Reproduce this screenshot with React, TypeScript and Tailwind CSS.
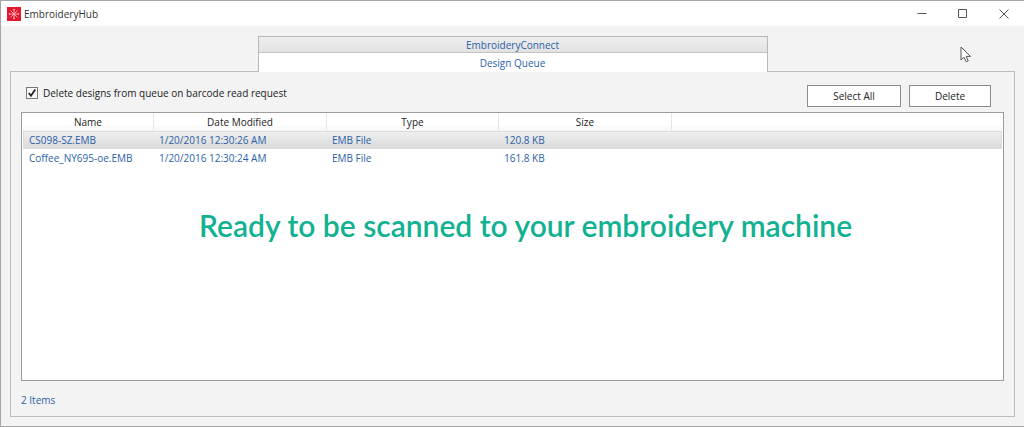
import React, { useState } from 'react';
import clsx from 'clsx';

interface Design {
  name: string;
  modified: string;
  type: string;
  size: string;
}

const DESIGNS: Design[] = [
  { name: 'CS098-SZ.EMB', modified: '1/20/2016 12:30:26 AM', type: 'EMB File', size: '120.8 KB' },
  { name: 'Coffee_NY695-oe.EMB', modified: '1/20/2016 12:30:24 AM', type: 'EMB File', size: '161.8 KB' },
];

const TABS = ['EmbroideryConnect', 'Design Queue'];

const HEAD_CELL = 'border-r border-[#e6e6e6] p-0 text-center font-normal';

const AppLogo = () => (
  <svg viewBox="0 0 14 14" className="size-3.5" aria-hidden="true">
    <rect width="14" height="14" fill="#e3172e" />
    <g stroke="#ffb3b8" strokeWidth="0.9" strokeLinecap="round">
      <path d="M7 2.6v8.8M2.4 7h9.2M3.8 3.8l6.4 6.4M10.2 3.8l-6.4 6.4" />
    </g>
    <g fill="#ffc4c8">
      <circle cx="7" cy="2.6" r="0.8" />
      <circle cx="7" cy="11.4" r="0.8" />
      <circle cx="2.4" cy="7" r="0.8" />
      <circle cx="11.6" cy="7" r="0.8" />
    </g>
  </svg>
);

const TitleBar = () => (
  <header className="flex h-[25px] items-center justify-between bg-white pl-[6px] pr-[15px]">
    <div className="flex items-center gap-[3px] text-[#333]">
      <AppLogo />
      <h1>EmbroideryHub</h1>
    </div>
    <div className="flex gap-[31px] text-[#555]">
      <button type="button" aria-label="Minimize">
        <svg viewBox="0 0 10 10" className="size-2.5" fill="none" stroke="currentColor">
          <path d="M0.5 4.5h9" />
        </svg>
      </button>
      <button type="button" aria-label="Maximize">
        <svg viewBox="0 0 10 10" className="size-2.5" fill="none" stroke="currentColor">
          <path d="M0.5 0.5h8v8h-8z" />
        </svg>
      </button>
      <button type="button" aria-label="Close">
        <svg viewBox="0 0 10 10" className="size-2.5" fill="none" stroke="currentColor">
          <path d="M0.5 0.5l9 9M9.5 0.5l-9 9" />
        </svg>
      </button>
    </div>
  </header>
);

export default function App() {
  const [tab, setTab] = useState('Design Queue');
  const [autoDelete, setAutoDelete] = useState(true);
  const [selected, setSelected] = useState<string[]>(['CS098-SZ.EMB']);

  return (
    <div className="relative flex min-h-screen flex-col border-y border-l border-[#a6a6a6] bg-[#f3f3f3] font-['Open_Sans','Noto_Sans',sans-serif] text-[10px] leading-4 text-[#222]">
      <TitleBar />

      <main className="flex flex-1 flex-col px-[9px] pb-[9px] pt-[10px]">
        <div
          role="tablist"
          className="z-10 -mb-px flex w-[510px] max-w-full flex-col self-center border-x border-t border-[#b8b8b8] text-[#2b5fa8]"
        >
          {TABS.map((t) => (
            <button
              key={t}
              type="button"
              role="tab"
              aria-selected={t === tab}
              onClick={() => setTab(t)}
              className={clsx(
                t === tab
                  ? 'h-[19px] bg-white'
                  : 'h-4 border-b border-[#c4c4c4] bg-linear-to-b from-[#eeeeee] to-[#e2e2e2]',
              )}
            >
              {t}
            </button>
          ))}
        </div>

        <section className="flex flex-1 flex-col border border-[#bdbdbd] px-[10px]">
          <div className="flex items-start justify-between pb-[5px] pl-[5px] pr-[13px] pt-[13px]">
            <label className="flex items-center gap-[5px]">
              <span className="relative flex size-3">
                <input
                  type="checkbox"
                  checked={autoDelete}
                  onChange={(e) => setAutoDelete(e.target.checked)}
                  className="peer size-3 appearance-none border border-[#777] bg-[#fafafa]"
                />
                <svg
                  viewBox="0 0 12 12"
                  className="pointer-events-none invisible absolute inset-0 peer-checked:visible"
                  fill="none"
                  stroke="#222"
                  strokeWidth="1.8"
                >
                  <path d="M2.8 6l2.2 2.8L9.2 2.6" />
                </svg>
              </span>
              Delete designs from queue on barcode read request
            </label>
            <div className="flex gap-2">
              <button
                type="button"
                onClick={() => setSelected(DESIGNS.map((d) => d.name))}
                className="h-[22px] w-[94px] border border-[#8c8c8c] bg-white"
              >
                Select All
              </button>
              <button
                type="button"
                onClick={() => setSelected([])}
                className="h-[22px] w-[82px] border border-[#8c8c8c] bg-white"
              >
                Delete
              </button>
            </div>
          </div>

          <div className="flex-1 border border-[#9c9c9c] bg-white px-px">
            <table className="w-full table-fixed border-separate border-spacing-0">
              <colgroup>
                <col className="w-[131px]" />
                <col className="w-[173px]" />
                <col className="w-[172px]" />
                <col className="w-[173px]" />
                <col />
              </colgroup>
              <thead>
                <tr className="h-[18px] bg-linear-to-b from-white from-60% to-[#f6f6f6]">
                  <th className={HEAD_CELL}>Name</th>
                  <th className={HEAD_CELL}>Date Modified</th>
                  <th className={HEAD_CELL}>Type</th>
                  <th className={HEAD_CELL}>Size</th>
                  <td />
                </tr>
              </thead>
              <tbody className="text-[#2b5fa8]">
                {DESIGNS.map((d) => (
                  <tr
                    key={d.name}
                    onClick={() => setSelected([d.name])}
                    className={clsx(
                      'h-[18px]',
                      selected.includes(d.name) &&
                        'bg-linear-to-b from-[#f0f0f0] to-[#dadada] outline -outline-offset-1 outline-[#dcdcdc]',
                    )}
                  >
                    <td className="p-0 pl-[6px]">{d.name}</td>
                    <td className="p-0 pl-[5px]">{d.modified}</td>
                    <td className="p-0 pl-[5px]">{d.type}</td>
                    <td className="p-0 pl-[5px]">{d.size}</td>
                    <td />
                  </tr>
                ))}
              </tbody>
            </table>
            <p className="pl-[176px] pt-[38px] font-['Lato',sans-serif] text-[30px] font-semibold leading-[40px] text-[#12b192]">
              Ready to be scanned to your embroidery machine
            </p>
          </div>

          <footer className="pb-2 pt-[11px] text-[#2b5fa8]">{DESIGNS.length} Items</footer>
        </section>
      </main>

      <svg
        viewBox="0 0 12 17"
        className="pointer-events-none absolute right-[52px] top-[45px] h-[17px] w-3"
        fill="#fff"
        stroke="#555"
        aria-hidden="true"
      >
        <path d="M1 1v13l3-2.8 2.2 4.6 2-1-2-4.4h4.3z" />
      </svg>
    </div>
  );
}
